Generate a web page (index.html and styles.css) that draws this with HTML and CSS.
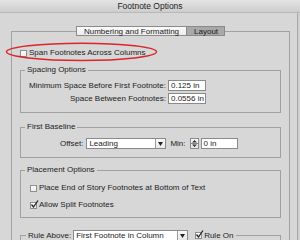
FILE: index.html
```html
<!DOCTYPE html>
<html>
<head>
<meta charset="utf-8">
<title>Footnote Options</title>
<link rel="stylesheet" href="styles.css">
</head>
<body>
<div class="window">
  <div class="titlebar">Footnote Options</div>
  <div class="content">
    <div class="tabs">
      <span class="tab">Numbering and Formatting</span><span class="tab tab-active">Layout</span>
    </div>
    <div class="panel">
      <div class="check span-row"><span class="box"></span><span>Span Footnotes Across Columns</span></div>

      <fieldset class="group g-spacing">
        <legend>Spacing Options</legend>
        <div class="grid">
          <span class="lbl">Minimum Space Before First Footnote:</span><span class="field">0.125 in</span>
          <span class="lbl">Space Between Footnotes:</span><span class="field">0.0556 in</span>
        </div>
      </fieldset>

      <fieldset class="group g-baseline">
        <legend>First Baseline</legend>
        <div class="row baseline-row">
          <span class="lbl">Offset:</span>
          <span class="select sel-offset"><span class="sel-text">Leading</span><span class="sel-arrow"><svg width="5" height="4" viewBox="0 0 5 4"><polygon points="0,0 5,0 2.5,4" fill="#222"/></svg></span></span>
          <span class="lbl min-lbl">Min:</span>
          <span class="spin"><svg width="7" height="9" viewBox="0 0 7 9"><polygon points="1,3.5 6,3.5 3.5,1" fill="#333"/><line x1="0" y1="4.5" x2="7" y2="4.5" stroke="#888" stroke-width="1"/><polygon points="1,5.5 6,5.5 3.5,8" fill="#333"/></svg></span>
          <span class="field field-min">0 in</span>
        </div>
      </fieldset>

      <fieldset class="group g-place">
        <legend>Placement Options</legend>
        <div class="place-body">
          <div class="check"><span class="box"></span><span>Place End of Story Footnotes at Bottom of Text</span></div>
          <div class="check"><span class="box checked"><svg width="9" height="9" viewBox="0 0 9 9"><path d="M1.5 4.5 L3.5 7 L8 0.5" fill="none" stroke="#222" stroke-width="1.3"/></svg></span><span>Allow Split Footnotes</span></div>
        </div>
      </fieldset>

      <fieldset class="group g-rule">
        <legend class="rule-legend">
          <span class="lbl">Rule Above:</span>
          <span class="select sel-rule"><span class="sel-text">First Footnote in Column</span><span class="sel-arrow"><svg width="5" height="4" viewBox="0 0 5 4"><polygon points="0,0 5,0 2.5,4" fill="#222"/></svg></span></span>
          <span class="check rule-check"><span class="box checked"><svg width="9" height="9" viewBox="0 0 9 9"><path d="M1.5 4.5 L3.5 7 L8 0.5" fill="none" stroke="#222" stroke-width="1.3"/></svg></span><span>Rule On</span></span>
        </legend>
        <div class="rule-body"></div>
      </fieldset>
    </div>
  </div>
  <svg class="annot" width="300" height="240" viewBox="0 0 300 240"><ellipse cx="81.5" cy="51.8" rx="75" ry="8.6" fill="none" stroke="#d9262b" stroke-width="1.5"/></svg>
</div>
</body>
</html>
```
FILE: styles.css
```css
html, body {
  margin: 0;
  padding: 0;
}
body {
  width: 300px;
  height: 240px;
  overflow: hidden;
  background: #cfcfcf;
  font-family: "Liberation Sans", Arial, sans-serif;
  font-size: 8px;
  color: #1c1c1c;
}
.window {
  position: relative;
  width: 300px;
  height: 240px;
  overflow: hidden;
}
.titlebar {
  height: 13px;
  line-height: 13px;
  box-sizing: border-box;
  text-align: center;
  font-size: 8.5px;
  color: #222;
  background: linear-gradient(#e4e4e4, #cdcdcd);
  border-bottom: 1px solid #b9b9b9;
}
.content {
  width: 298px;
  height: 227px;
  box-sizing: border-box;
  background: #d7d7d7;
  border-right: 1px solid #a9a9a9;
  padding: 13px 7px 0 11px;
}
.tabs {
  display: flex;
  justify-content: center;
  margin-bottom: -5px;
  position: relative;
  z-index: 1;
}
.tab {
  height: 10px;
  line-height: 9px;
  box-sizing: border-box;
  padding: 0 7px;
  border: 1px solid #8a8a8a;
  background: linear-gradient(#fbfbfb, #ececec);
  color: #1a1a1a;
}
.tab-active {
  background: #a9a9a9;
  border-left: none;
  padding: 0 6px 0 7px;
}
.panel {
  border: 1px solid #a2a2a2;
  height: 240px;
  padding: 16px 8px 0 8px;
}
.check {
  display: flex;
  align-items: center;
  height: 10px;
  line-height: 10px;
}
.box {
  width: 7px;
  height: 7px;
  box-sizing: border-box;
  border: 1px solid #8e8e8e;
  background: linear-gradient(#ffffff, #ececec);
  margin-right: 2px;
  position: relative;
  flex: none;
}
.box svg {
  position: absolute;
  left: -1px;
  top: -3px;
}
.group {
  margin: 0;
  padding: 0;
  border: 1px solid #a0a0a0;
  min-width: 0;
}
.group legend {
  margin-left: 4px;
  padding: 0 2px;
  line-height: 10px;
  height: 10px;
}
.g-spacing {
  margin-top: 7px;
}
.grid {
  display: grid;
  grid-template-columns: max-content max-content;
  column-gap: 2px;
  row-gap: 2px;
  align-items: center;
  padding: 5px 0 8px 8px;
}
.lbl {
  text-align: right;
  white-space: nowrap;
}
.field {
  height: 11px;
  line-height: 9px;
  box-sizing: border-box;
  width: 38px;
  border: 1px solid #8a8a8a;
  background: #fff;
  padding-left: 2px;
  white-space: nowrap;
  overflow: hidden;
}
.g-baseline {
  margin-top: 9px;
}
.row {
  display: flex;
  align-items: center;
}
.baseline-row {
  padding: 6px 0 8px 39px;
}
.baseline-row .lbl:first-child {
  margin-right: 3px;
}
.select {
  display: flex;
  height: 11px;
  box-sizing: border-box;
  border: 1px solid #8a8a8a;
  background: #fff;
  line-height: 9px;
}
.sel-offset {
  width: 80px;
  border-left-color: #6f8fb5;
}
.sel-text {
  flex: 1;
  padding-left: 2px;
  white-space: nowrap;
  overflow: hidden;
}
.sel-arrow {
  width: 9px;
  border-left: 1px solid #9a9a9a;
  background: linear-gradient(#fafafa, #e8e8e8);
  display: flex;
  align-items: center;
  justify-content: center;
}
.min-lbl {
  margin-left: 4px;
  margin-right: 4px;
}
.spin {
  width: 9px;
  height: 11px;
  box-sizing: border-box;
  border: 1px solid #8a8a8a;
  background: linear-gradient(#fbfbfb, #e6e6e6);
  display: flex;
  align-items: center;
  justify-content: center;
  margin-right: 2px;
}
.field-min {
  width: 37px;
}
.g-place {
  margin-top: 7px;
}
.place-body {
  display: flex;
  flex-direction: column;
  row-gap: 7px;
  padding: 8px 0 7px 9px;
}
.g-rule {
  margin-top: 12px;
}
.group .rule-legend {
  display: flex;
  align-items: center;
  height: 11px;
  line-height: 11px;
  margin-left: 5px;
  padding: 0 2px;
}
.sel-rule {
  width: 115px;
  margin-left: 2px;
}
.rule-check {
  margin-left: 7px;
}
.rule-body {
  height: 20px;
}
.annot {
  position: absolute;
  left: 0;
  top: 0;
  pointer-events: none;
}
```
